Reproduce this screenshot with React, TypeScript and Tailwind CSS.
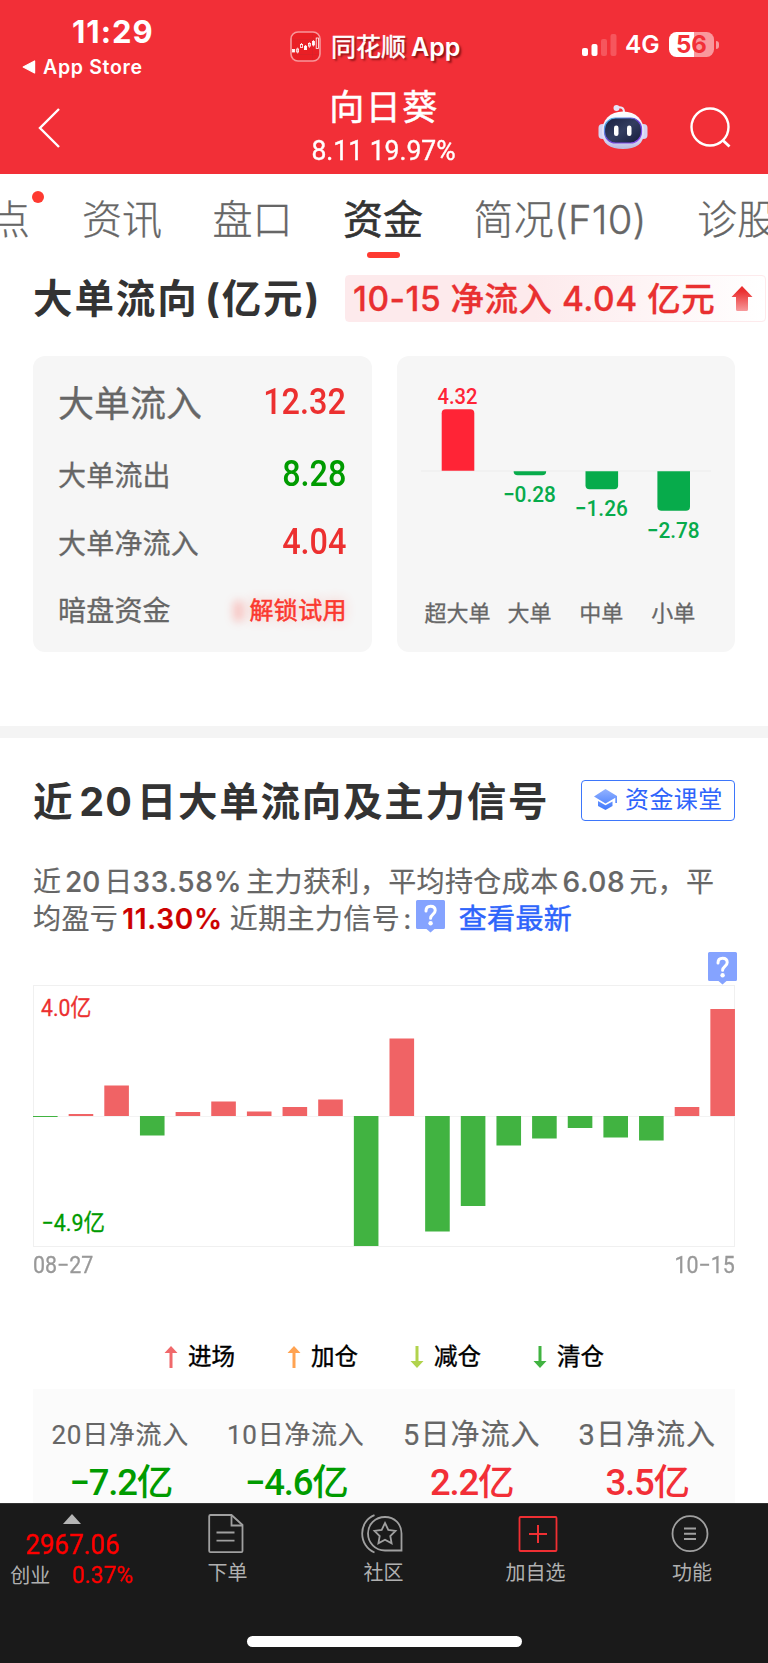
import React from "react";

const din = "font-['Roboto','Noto_Sans_CJK_SC',sans-serif]";
const sf = "font-['Inter','Noto_Sans_CJK_SC',sans-serif]";

function StatusBar() {
  return (
    <div className="flex h-[80px] items-start text-white">
      <div className="w-[290px] shrink-0 pl-[22px] pt-[17px]">
        <div className="ml-[50px] text-[31px] font-bold leading-[30px] tracking-[1px]">11:29</div>
        <div className="mt-[10px] flex items-center text-[19.5px] font-semibold leading-[20px] tracking-[0.7px]">
          <svg width="14" height="14" viewBox="0 0 14 14" className="mr-[7px]">
            <path d="M12.6 1v12L1.2 7z" fill="#fff" stroke="#fff" strokeWidth="1.2" strokeLinejoin="round" />
          </svg>
          App Store
        </div>
      </div>
      <div className="flex w-[292px] shrink-0 items-center pt-[31px]">
        <svg width="31" height="31" viewBox="0 0 31 31" className="shrink-0">
          <rect x="1" y="1" width="29" height="29" rx="7" fill="#e91f25" stroke="#f8979a" strokeWidth="1.6" />
          <path d="M2 8.500h27M2 23.500h27M22.500 2v27" stroke="#d3252a" strokeWidth="0.500" />
          <g fill="#fff" stroke="#fff" strokeWidth="0.800">
            <rect x="2.500" y="18.500" width="2.200" height="2.500" />
            <rect x="6.600" y="18" width="2" height="3" fill="none" />
            <path d="M7.600 16.500v6" fill="none" strokeWidth="0.600" />
            <rect x="10.400" y="13.500" width="2.200" height="3" fill="none" />
            <path d="M11.500 12v1.500" />
            <rect x="14.400" y="15.200" width="2.200" height="3.400" />
            <path d="M15.500 14v2" />
            <rect x="18.400" y="12.500" width="2" height="2.600" fill="none" />
            <path d="M19.400 11v6" fill="none" strokeWidth="0.600" />
            <rect x="22.400" y="10.500" width="2" height="3.500" />
            <path d="M23.400 9v6.500" />
            <rect x="26.200" y="7" width="2.200" height="10.500" fill="none" />
          </g>
        </svg>
        <div className="ml-[10px] whitespace-nowrap text-[25px] leading-[30px]">
          <span className="[-webkit-text-stroke:0.5px_#fff] [text-shadow:2px_2px_2px_rgba(70,0,0,0.6)]">同花顺</span>
          <span className="ml-[5px] font-semibold [text-shadow:2px_2px_2px_rgba(70,0,0,0.6)]">App</span>
        </div>
      </div>
      <div className="flex shrink-0 items-center pt-[31px]">
        <svg width="36" height="24" viewBox="0 0 36 24" className="shrink-0">
          <rect x="0" y="15" width="6" height="8" rx="2" fill="#fff" />
          <rect x="9.500" y="11" width="6" height="12" rx="2" fill="#fff" />
          <rect x="19" y="6" width="6" height="17" rx="2" fill="#f6565d" />
          <rect x="28.500" y="1" width="6" height="22" rx="2" fill="#f6565d" />
        </svg>
        <div className="ml-[7px] w-[40px] shrink-0 text-[24.5px] font-semibold leading-[27px]">4G</div>
        <div className="ml-[4px] flex h-[25px] w-[45px] shrink-0 items-center justify-center rounded-[7.5px] bg-[linear-gradient(90deg,#fff_25px,#f9989c_25px)]">
          <span className="text-[24px] font-bold leading-[25px] text-[#f22f37]">56</span>
        </div>
        <div className="ml-[2px] h-[8px] w-[3px] rounded-r-full bg-[#f9989c]" />
      </div>
    </div>
  );
}

function Robot() {
  return (
    <svg width="50" height="48" viewBox="0 0 50 48">
      <defs>
        <linearGradient id="shell" x1="0" y1="0" x2="0" y2="1">
          <stop offset="0" stopColor="#fff" />
          <stop offset="0.700" stopColor="#dcdcf6" />
          <stop offset="1" stopColor="#b9badf" />
        </linearGradient>
        <linearGradient id="visor" x1="0" y1="0" x2="1" y2="1">
          <stop offset="0" stopColor="#4bc3e8" />
          <stop offset="0.500" stopColor="#6b45d8" />
          <stop offset="1" stopColor="#8e4cf0" />
        </linearGradient>
        <linearGradient id="glass" x1="0" y1="0" x2="1" y2="1">
          <stop offset="0" stopColor="#1a2040" />
          <stop offset="0.500" stopColor="#333d60" />
          <stop offset="1" stopColor="#151b3b" />
        </linearGradient>
      </defs>
      <path d="M18.500 3.500c5-.8 7.500.2 7.500 5" fill="none" stroke="#e9e9fa" strokeWidth="2" />
      <circle cx="18.500" cy="4" r="3" fill="#e4e4f8" />
      <rect x="0.500" y="20" width="8" height="15" rx="4" fill="#d4d4f2" />
      <rect x="41.500" y="20" width="8" height="15" rx="4" fill="#d4d4f2" />
      <path d="M25 7.500C38 7.500 46 16 46 28c0 12-8 17-21 17S4 40 4 28C4 16 12 7.500 25 7.500z" fill="url(#shell)" />
      <rect x="6.500" y="14" width="37" height="25" rx="11" fill="url(#glass)" stroke="url(#visor)" strokeWidth="1.200" />
      <rect x="16" y="21.500" width="4.500" height="10.500" rx="2.200" fill="#fff" />
      <rect x="29" y="21.500" width="4.500" height="10.500" rx="2.200" fill="#fff" />
    </svg>
  );
}

function NavBar() {
  return (
    <div className="flex h-[94px] text-white">
      <div className="w-[234px] pl-[38px] pt-[28px]">
        <svg width="22" height="40" viewBox="0 0 22 40">
          <path d="M21 1L2 20l19 19" fill="none" stroke="#fff" strokeWidth="2.400" />
        </svg>
      </div>
      <div className="flex w-[300px] flex-col items-center pt-[8px]">
        <div className="text-[35px] leading-[38px] tracking-[1.500px] [-webkit-text-stroke:0.5px_#fff]">向日葵</div>
        <div className={`${din} mt-[9px] scale-x-[0.93] whitespace-nowrap text-[28.5px] leading-[32px] [-webkit-text-stroke:0.4px_#fff]`}>
          8.11 19.97%
        </div>
      </div>
      <div className="flex gap-[41px] pl-[64px] pt-[24px]">
        <Robot />
        <svg width="44" height="44" viewBox="0 0 44 44" className="mt-[2px]">
          <circle cx="21" cy="21" r="18.500" fill="none" stroke="#fff" strokeWidth="2.400" />
          <path d="M33.500 34l7 6.500" stroke="#fff" strokeWidth="2.800" />
        </svg>
      </div>
    </div>
  );
}

function Tabs() {
  return (
    <div className="flex h-[90px] overflow-hidden pt-[26px] text-[#666]">
      <div className="-ml-[10px] flex gap-[50.500px] whitespace-nowrap text-[40px] font-light leading-[40px] [-webkit-text-stroke:0.3px]">
        <div className="relative mr-[1.500px]">
          点<span className="absolute -right-[14px] -top-[9px] size-[12px] rounded-full bg-[#fe3a31]" />
        </div>
        <div>资讯</div>
        <div>盘口</div>
        <div className="flex flex-col items-center font-normal text-[#333]">
          <span className="[-webkit-text-stroke:0.6px_#333]">资金</span>
          <span className="mt-[12px] h-[6px] w-[33px] rounded-full bg-[#fe3a31]" />
        </div>
        <div className="tracking-[0.2px]">简况(F10)</div>
        <div>诊股</div>
      </div>
    </div>
  );
}

function FlowHeading() {
  return (
    <div className="flex h-[92px] pt-[10px]">
      <h2 className="ml-[33px] mt-[3px] w-[312px] whitespace-nowrap text-[39.500px] font-bold leading-[44px] tracking-[1.900px] text-[#333]">
        大单流向<span className="-ml-[2px]"> </span><span className="-ml-[3px]">(亿元)</span>
      </h2>
      <div className="mt-[0.500px] flex h-[47px] w-[421px] items-center rounded-[4px] border border-[#fdeaec] bg-[linear-gradient(90deg,#fdeaec_45%,#ffffff)] pl-[7px] pt-[1px] text-[33.500px] font-medium leading-[46px] tracking-[0.5px] text-[#e93030]">
        <span className="whitespace-nowrap [-webkit-text-stroke:0.3px_#e93030]">10-15 净流入 4.04 亿元</span>
        <svg width="22" height="26" viewBox="0 0 22 26" className="ml-[16px] shrink-0">
          <defs>
            <linearGradient id="up" x1="0" y1="0" x2="0" y2="1">
              <stop offset="0.200" stopColor="#ea2f2f" />
              <stop offset="1" stopColor="#f79a9c" />
            </linearGradient>
          </defs>
          <path d="M11 0l10.500 11H17v12.500q0 1.500-1.500 1.500h-9Q5 25 5 23.500V11H.5z" fill="url(#up)" />
        </svg>
      </div>
    </div>
  );
}

function SummaryRow({ label, value, big, green }: { label: string; value: string; big?: boolean; green?: boolean }) {
  return (
    <div className={big ? "flex h-[76px] items-center justify-between" : "flex h-[68px] items-center justify-between"}>
      <span
        className={
          big
            ? "text-[36px] leading-[40px] [-webkit-text-stroke:0.3px]"
            : "text-[28px] leading-[32px] tracking-[0.2px] [-webkit-text-stroke:0.3px]"
        }
      >
        {label}
      </span>
      <span
        className={`${din} mb-[4px] mr-[1px] origin-right scale-x-[0.9] text-[36px] font-medium leading-[36px] ${green ? "text-[#009b00]" : "text-[#ec3030]"}`}
      >
        {value}
      </span>
    </div>
  );
}

const orders = [
  { name: "超大单", value: "4.32", w: 40, y: 53.3, h: 61.4, up: true, ty: 47.5 },
  { name: "大单", value: "−0.28", w: 53, y: 115.3, h: 4, up: false, ty: 146 },
  { name: "中单", value: "−1.26", w: 53, y: 115.3, h: 18, up: false, ty: 160 },
  { name: "小单", value: "−2.78", w: 53, y: 115.3, h: 39.4, up: false, ty: 181.5 },
];

function OrderChart() {
  return (
    <svg width="338" height="296" viewBox="0 0 338 296" className={din}>
      <path d="M24 115h290" stroke="#ececec" strokeWidth="1" />
      {orders.map((o, i) => {
        const c = 61 + i * 71.900;
        const l = c - 16.300;
        const r = c + 16.300;
        const k = Math.min(4, o.h);
        const b = o.y + o.h;
        const d = o.up
          ? `M${l} ${b}V${o.y + k}q0-${k} ${k}-${k}H${r - k}q${k} 0 ${k} ${k}V${b}z`
          : `M${l} ${o.y}V${b - k}q0 ${k} ${k} ${k}H${r - k}q${k} 0 ${k}-${k}V${o.y}z`;
        return (
          <g key={o.name}>
            <path d={d} fill={o.up ? "#ff2436" : "#07ab4b"} />
            <text x={c - 0.5} y={o.ty} textAnchor="middle" fontSize="22" fontWeight="500" fill={o.up ? "#ff2436" : "#07ab4b"} textLength={o.w} lengthAdjust="spacingAndGlyphs">
              {o.value}
            </text>
            <text x={c - 0.5} y="265" textAnchor="middle" fontSize="22" fill="#666" stroke="#666" strokeWidth="0.300">
              {o.name}
            </text>
          </g>
        );
      })}
    </svg>
  );
}

function Cards() {
  return (
    <div className="flex h-[370px] gap-[25px] px-[33px]">
      <div className="h-[296px] w-[339px] rounded-[12px] bg-[#f6f6f6] pl-[25px] pr-[25px] pt-[10px] text-[#666]">
        <SummaryRow label="大单流入" value="12.32" big />
        <SummaryRow label="大单流出" value="8.28" green />
        <SummaryRow label="大单净流入" value="4.04" />
        <div className="flex h-[66px] items-center justify-between">
          <span className="text-[28px] leading-[32px] tracking-[0.2px] [-webkit-text-stroke:0.3px]">暗盘资金</span>
          <div className="flex items-center">
            <span className="mr-[5px] h-[22px] w-[11px] rounded-full bg-[#ff3b30]/25 blur-[4px]" />
            <span className="text-[24px] leading-[28px] tracking-[0.4px] text-[#fb382f] [-webkit-text-stroke:0.5px_#fb382f] [text-shadow:0_0_12px_rgba(255,59,48,0.3)]">
              解锁试用
            </span>
          </div>
        </div>
      </div>
      <div className="h-[296px] w-[338px] rounded-[12px] bg-[#f6f6f6]">
        <OrderChart />
      </div>
    </div>
  );
}

function HelpBadge() {
  return (
    <svg width="29" height="33" viewBox="0 0 29 33" className="shrink-0">
      <path d="M1.500 0h26Q29 0 29 1.500v26q0 1.500-1.500 1.500H18.500l-4 3.500-4-3.500H1.500Q0 29 0 27.500v-26Q0 0 1.500 0z" fill="#85a3ff" />
      <path d="M10 11c0-3 1.900-4.700 4.600-4.700 2.700 0 4.600 1.600 4.600 4.200 0 3.900-4.600 4-4.600 7.800" fill="none" stroke="#fff" strokeWidth="3" strokeLinecap="round" />
      <circle cx="14.600" cy="23.300" r="2.200" fill="#fff" />
    </svg>
  );
}

function SignalIntro() {
  return (
    <div className="h-[247px] pl-[33px] pr-[33px] pt-[41px] text-[#666]">
      <div className="flex h-[44px] items-start justify-between">
        <h2 className="mt-[1px] whitespace-nowrap text-[39.500px] font-bold leading-[44px] tracking-[1.750px] text-[#333]">
          近<span className="ml-[5px] mr-[4px] tracking-[1px]">20</span>日大单流向及主力信号
        </h2>
        <div className="mt-[0.500px] flex h-[41px] w-[154px] items-center rounded-[4px] border border-[#3d76fb] pl-[12px] text-[24px] leading-[30px] text-[#2e64fb]">
          <svg width="24" height="22" viewBox="0 0 24 22" className="mr-[7px]">
            <defs>
              <linearGradient id="cap" x1="0" y1="0" x2="0" y2="1">
                <stop offset="0" stopColor="#93b2ff" />
                <stop offset="1" stopColor="#4079fd" />
              </linearGradient>
            </defs>
            <path d="M11.500 0L23 7v7h-1.700V8.700L11.500 14.500 0 7.500zM4 12l7.500 4.300L18.500 12.400V17l-7 4L4 17z" fill="url(#cap)" />
          </svg>
          <span className="whitespace-nowrap tracking-[0.4px]">资金课堂</span>
        </div>
      </div>
      <div className="mt-[41px] whitespace-nowrap text-[28px] leading-[37px] tracking-[0.400px] [-webkit-text-stroke:0.2px]">
        <div>
          近<span className="mx-[3.500px] font-medium tracking-[0.2px]">20</span>日
          <span className="mr-[4px] font-medium tracking-[0.7px]">33.58%</span>主力获利，平均持仓成本
          <span className="mx-[4px] font-medium tracking-[0.600px]">6.08</span>元，平
        </div>
        <div className="flex">
          <span>均盈亏</span>
          <span className="ml-[4px] mr-[7px] font-semibold tracking-[0.7px] text-[#cc0000]">11.30%</span>
          <span>近期主力信号</span>
          <span className="w-[15.500px] pl-[3px]">:</span>
          <div className="-mt-[1px]">
            <HelpBadge />
          </div>
          <span className="ml-[14px] text-[#2e64fb] [-webkit-text-stroke:0.5px_#2e64fb]">查看最新</span>
        </div>
      </div>
    </div>
  );
}

const flows = [-1, 2, 30.500, -19.500, 4, 14.500, 4.500, 9, 16.500, -130, 77.500, -115.500, -90, -29.500, -22.500, -12, -21.500, -24.500, 9, 107];

function FlowChart() {
  return (
    <div className="h-[343px] px-[33px]">
      <div className="relative h-[262px]">
        <svg width="702" height="262" viewBox="0 0 702 262" className={din}>
          <rect x="0.500" y="0.500" width="701" height="261" fill="#fff" stroke="#f0f0f0" />
          <path d="M0 131.500h702" stroke="#f3f3f3" />
          {flows.map((v, i) => (
            <rect
              key={i}
              x={i * 35.650}
              y={v > 0 ? 131 - v : 131}
              width="24.600"
              height={Math.abs(v)}
              fill={v > 0 ? "#f06365" : "#41b341"}
            />
          ))}
          <text x="8" y="30.500" fontSize="23.500" fill="#ec3030" stroke="#ec3030" strokeWidth="0.300" textLength="50.500" lengthAdjust="spacingAndGlyphs">4.0亿</text>
          <text x="8.500" y="245.500" fontSize="23.500" fill="#009b00" stroke="#009b00" strokeWidth="0.300" textLength="63.500" lengthAdjust="spacingAndGlyphs">−4.9亿</text>
        </svg>
        <div className="absolute -top-[33px] right-[-2px]">
          <HelpBadge />
        </div>
      </div>
      <div className={`${din} mt-[5px] flex justify-between text-[23px] leading-[28px] text-[#999] [-webkit-text-stroke:0.3px]`}>
        <span className="origin-left scale-x-[0.93]">08−27</span>
        <span className="origin-right scale-x-[0.93]">10−15</span>
      </div>
    </div>
  );
}

function Arrow({ color, down }: { color: string; down?: boolean }) {
  return (
    <svg width="14" height="22" viewBox="0 0 14 22" className={down ? "rotate-180" : ""}>
      <path d="M7 0l6.500 7H8.500v15h-3V7H.5z" fill={color} />
    </svg>
  );
}

function Legend() {
  const items = [
    { name: "进场", color: "#f0696b", down: false },
    { name: "加仓", color: "#ffa352", down: false },
    { name: "减仓", color: "#b1d34d", down: true },
    { name: "清仓", color: "#41b341", down: true },
  ];
  return (
    <div className="flex h-[61px] pl-[164px] pt-[14px]">
      {items.map((it) => (
        <div key={it.name} className="flex h-[30px] w-[123px] items-center text-[23.500px] leading-[30px] text-black [-webkit-text-stroke:0.4px_#000]">
          <Arrow color={it.color} down={it.down} />
          <span className="ml-[10px]">{it.name}</span>
        </div>
      ))}
    </div>
  );
}

function NetTable() {
  const cols = [
    { name: "20日净流入", value: "−7.2亿", small: true, up: false },
    { name: "10日净流入", value: "−4.6亿", small: true, up: false },
    { name: "5日净流入", value: "2.2亿", small: false, up: true },
    { name: "3日净流入", value: "3.5亿", small: false, up: true },
  ];
  return (
    <div className="mx-[33px] grid h-[114px] grid-cols-4 overflow-hidden bg-[#fbfbfb] pt-[30px] text-center">
      {cols.map((c) => (
        <div key={c.name} className="whitespace-nowrap">
          <div
            className={
              c.small
                ? "-ml-[1px] text-[26px] leading-[32px] tracking-[0.7px] text-[#666] [-webkit-text-stroke:0.2px]"
                : "text-[29px] leading-[32px] tracking-[1px] text-[#666] [-webkit-text-stroke:0.2px]"
            }
          >
            <span className={din}>{c.name}</span>
          </div>
          <div
            className={`${din} mt-[14px] text-[36.500px] font-medium leading-[36px] tracking-[-1.200px] ${c.up ? "text-[#f22f37]" : "text-[#009b00]"}`}
          >
            {c.value}
          </div>
        </div>
      ))}
    </div>
  );
}

function BottomBar() {
  return (
    <div className="flex h-[160px] flex-col border-t border-[#333] bg-[#1a1a1a] text-[20px] leading-[24px] text-[#b0b0b0]">
      <div className="flex h-[132px]">
        <div className="flex w-[144px] flex-col items-center pt-[10px]">
          <svg width="18" height="10" viewBox="0 0 18 10">
            <path d="M9 0l9 10H0z" fill="#b5b5b5" />
          </svg>
          <div className={`${din} ml-[2px] mt-[5px] scale-x-[0.91] text-[28.500px] leading-[32px] text-[#ff0000] [-webkit-text-stroke:0.5px_#f00]`}>
            2967.06
          </div>
          <div className="ml-[2px] flex items-center gap-[20px]">
            <span className="mt-[2px]">创业</span>
            <span className={`${din} scale-x-[0.93] text-[24.500px] leading-[28px] text-[#ff0000] [-webkit-text-stroke:0.4px_#f00]`}>
              0.37%
            </span>
          </div>
        </div>
        <div className="flex w-[167px] flex-col items-center pt-[10px]">
          <svg width="36" height="40" viewBox="0 0 36 40" fill="none" stroke="#a0a0a0" strokeWidth="1.800" className="-ml-[4px]">
            <path d="M2.500 1h21L34.500 11v26q0 1.200-1.200 1.200H2.500Q1.200 38.200 1.200 37V2.200Q1.200 1 2.500 1z" />
            <path d="M23.500 1v10.500h11M8.500 18.500h18M8.500 26.700h18" />
          </svg>
          <span className="mt-[7px]">下单</span>
        </div>
        <div className="flex w-[144px] flex-col items-center pt-[10px]">
          <svg width="42" height="40" viewBox="0 0 42 40" fill="none" stroke="#a0a0a0" strokeWidth="1.800" className="-ml-[3px]">
            <path d="M13.500 1.200C6 4 1.200 11 1.200 19.500S6 35.500 13.500 38.500" />
            <path d="M24 3C14 3 7 10.500 7 19.500S14 36.500 24 36.500h16.500V19.500C40.500 10 33.500 3 24 3z" />
            <path d="M24 9l3.300 6.800 7.200 1-5.200 5.200 1.300 7.300-6.600-3.500-6.600 3.500 1.300-7.300-5.200-5.200 7.200-1z" />
          </svg>
          <span className="ml-[1px] mt-[7px]">社区</span>
        </div>
        <div className="flex w-[160px] flex-col items-center pt-[10px]">
          <svg width="40" height="40" viewBox="0 0 40 40" fill="none" stroke="#ef2f33" strokeWidth="1.800" className="ml-[5px]">
            <rect x="1.500" y="3" width="37" height="34" rx="1" />
            <path d="M11 20h18M20 11v18" strokeWidth="2" />
          </svg>
          <span className="ml-[1px] mt-[7px]">加自选</span>
        </div>
        <div className="flex w-[153px] flex-col items-center pt-[10px]">
          <svg width="40" height="40" viewBox="0 0 40 40" fill="none" stroke="#a0a0a0" strokeWidth="1.800" className="-ml-[1px]">
            <circle cx="19" cy="19.700" r="17.500" />
            <path d="M13 14.500h12M13 19.700h12M13 25h12" strokeWidth="2" />
          </svg>
          <span className="ml-[1px] mt-[7px]">功能</span>
        </div>
      </div>
      <div className="mx-auto h-[11px] w-[275px] rounded-full bg-white" />
    </div>
  );
}

export default function App() {
  return (
    <div className={`${sf} h-[1663px] w-[768px] overflow-hidden bg-white`}>
      <header className="h-[174px] bg-[#f22f37]">
        <StatusBar />
        <NavBar />
      </header>
      <Tabs />
      <FlowHeading />
      <Cards />
      <div className="h-[12px] bg-[#f4f4f4]" />
      <SignalIntro />
      <FlowChart />
      <Legend />
      <NetTable />
      <BottomBar />
    </div>
  );
}
